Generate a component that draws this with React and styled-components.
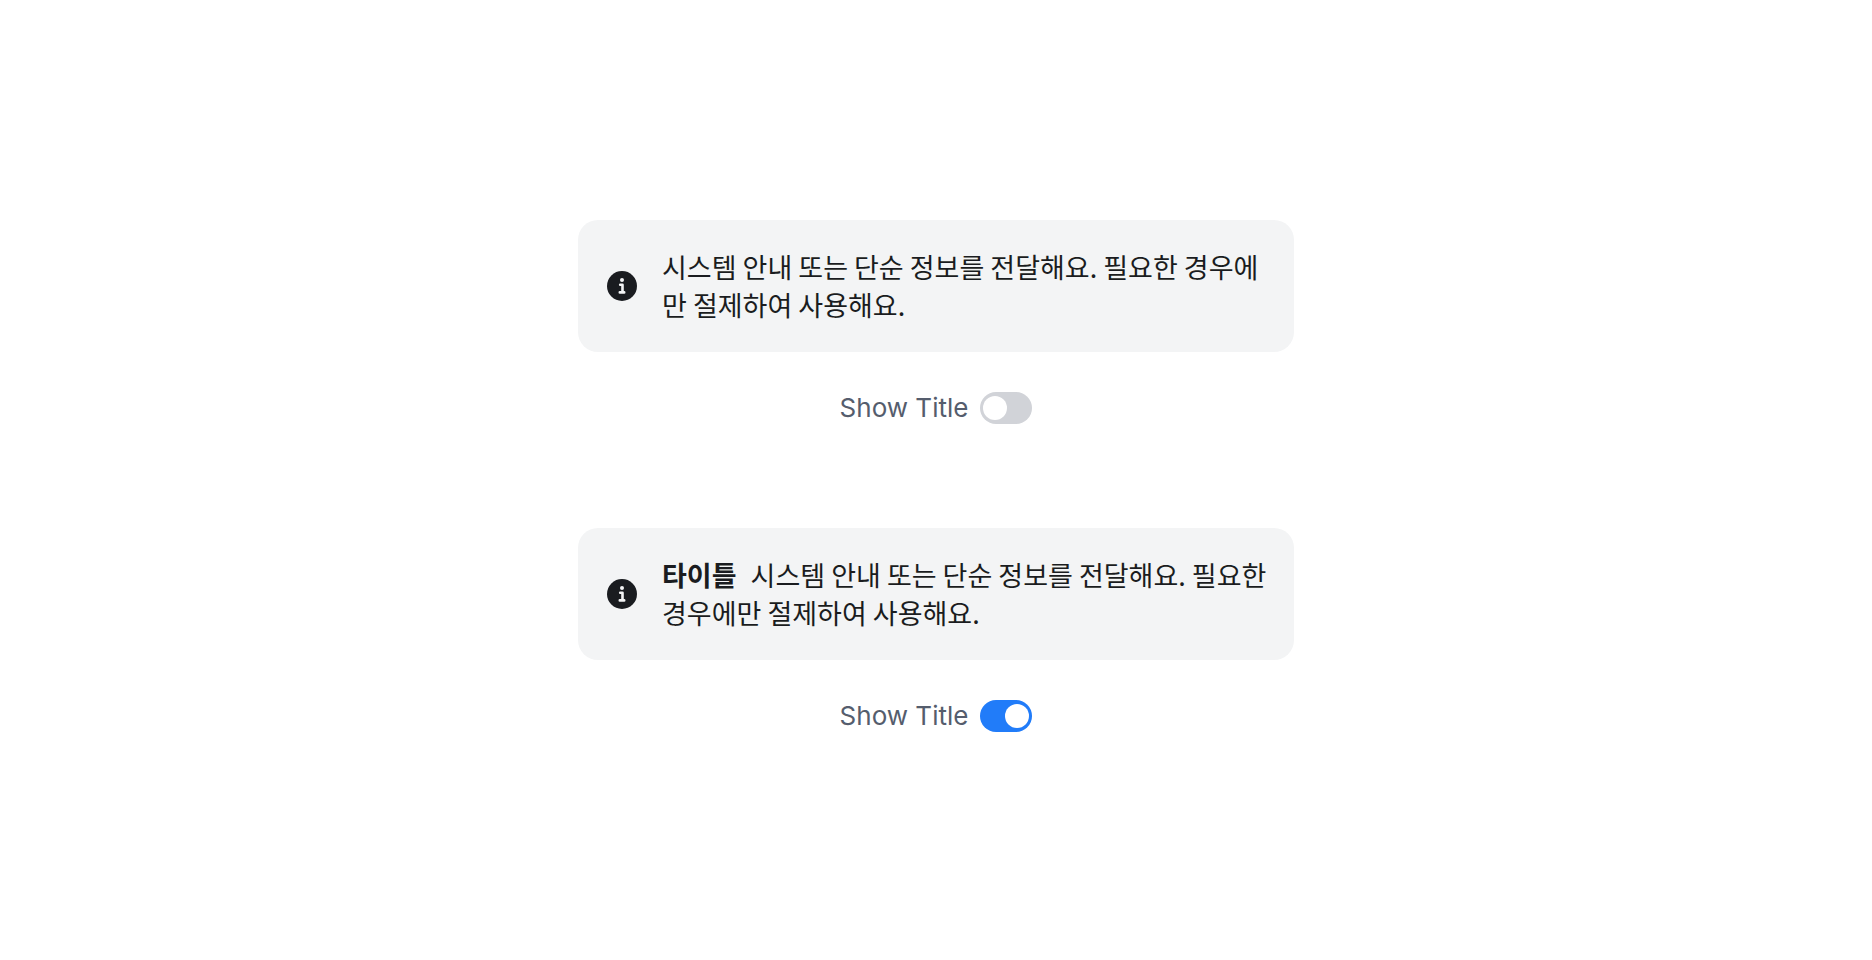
import React, { useId, useState } from "react";
import styled, { createGlobalStyle } from "styled-components";

const GlobalStyle = createGlobalStyle`
  *, *::before { box-sizing: border-box; }
  body {
    margin: 0;
    background: #fff;
    color: #1a1c20;
    font-family: Inter, "Noto Sans CJK KR", sans-serif;
  }
`;

const Page = styled.main`
  min-height: 100vh;
  padding: 32px 24px 40px;
  display: flex;
  flex-direction: column;
  align-items: center;
  justify-content: center;
  gap: 104px;
`;

const Example = styled.section`
  width: 100%;
  max-width: 716px;
  display: flex;
  flex-direction: column;
  align-items: center;
  gap: 40px;
`;

const Callout = styled.div`
  width: 100%;
  padding: 28px 20px 28px 28px;
  display: flex;
  align-items: center;
  gap: 24px;
  border-radius: 20px;
  background: #f3f4f5;
`;

const Icon = styled.svg`
  width: 32px;
  height: 32px;
  flex: none;
`;

const Message = styled.p`
  margin: 0;
  flex: 1;
  min-width: 0;
  font-family: "Noto Sans CJK KR", sans-serif;
  font-size: 27px;
  line-height: 38px;
`;

const Title = styled.strong`
  margin-right: 8px;
  font-weight: 700;
`;

const SwitchLabel = styled.label`
  display: flex;
  align-items: center;
  gap: 12px;
  font-size: 26px;
  line-height: 32px;
  color: #555d6d;
  cursor: pointer;
`;

const Switch = styled.input`
  appearance: none;
  width: 52px;
  height: 32px;
  margin: 0;
  padding: 4px 3px;
  display: flex;
  justify-content: flex-start;
  border-radius: 16px;
  background: #d1d3d8;
  cursor: pointer;

  &::before {
    content: "";
    width: 24px;
    height: 24px;
    border-radius: 50%;
    background: #fff;
  }

  &:checked {
    justify-content: flex-end;
    background: #217cf9;
  }
`;

function InfoIcon() {
  return (
    <Icon viewBox="0 0 32 32" aria-hidden="true">
      <circle cx="16" cy="16" r="15" fill="#1a1c20" />
      <circle cx="16" cy="9.9" r="2" fill="#f3f4f5" />
      <path
        d="M14.2 14.8H16.5V22.4M13.8 22.4H18.2"
        fill="none"
        stroke="#f3f4f5"
        strokeWidth="2.6"
        strokeLinecap="round"
        strokeLinejoin="round"
      />
    </Icon>
  );
}

function CalloutExample({ defaultShowTitle = false }) {
  const [showTitle, setShowTitle] = useState(defaultShowTitle);
  const id = useId();
  return (
    <Example>
      <Callout>
        <InfoIcon />
        <Message>
          {showTitle && <><Title>타이틀</Title>{" "}</>}
          시스템 안내 또는 단순 정보를 전달해요. 필요한 경우에만 절제하여 사용해요.
        </Message>
      </Callout>
      <SwitchLabel htmlFor={id}>
        Show Title
        <Switch
          id={id}
          type="checkbox"
          role="switch"
          checked={showTitle}
          onChange={(event) => setShowTitle(event.target.checked)}
        />
      </SwitchLabel>
    </Example>
  );
}

export default function App() {
  return (
    <>
      <GlobalStyle />
      <Page>
        <CalloutExample />
        <CalloutExample defaultShowTitle />
      </Page>
    </>
  );
}
